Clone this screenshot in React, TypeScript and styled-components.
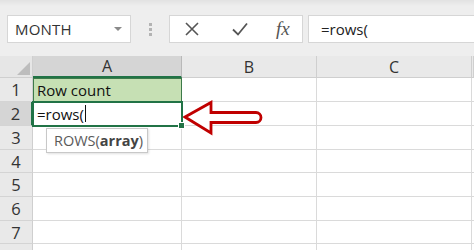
import React from "react";
import styled, { createGlobalStyle } from "styled-components";

const GlobalStyle = createGlobalStyle`
  html, body {
    margin: 0;
    padding: 0;
    background: #ffffff;
    overflow: hidden;
  }
  body {
    font-family: "Open Sans", "Noto Sans", "Liberation Sans", sans-serif;
  }
`;

const Page = styled.div`
  width: 474px;
  height: 250px;
  overflow: hidden;
  position: relative;
  background: #ffffff;
`;

const Toolbar = styled.div`
  height: 56px;
  box-sizing: border-box;
  padding: 15px 0 13px 7px;
  display: flex;
  align-items: stretch;
  background: linear-gradient(#e2e2e2 0px, #eeeeee 6px, #eeeeee 100%);
`;

const Box = styled.div<{ $w: number }>`
  width: ${(p) => p.$w}px;
  box-sizing: border-box;
  background: #ffffff;
  border: 1px solid #d6d6d6;
  display: flex;
  align-items: center;
`;

const NameBox = styled(Box)`
  padding: 0 8px 0 7px;
  justify-content: space-between;
  font-size: 15px;
  color: #333333;
  letter-spacing: 0.2px;
`;

const Caret = styled.span`
  width: 0;
  height: 0;
  border-left: 4px solid transparent;
  border-right: 4px solid transparent;
  border-top: 4px solid #8a8a8a;
`;

const Grip = styled.div`
  width: 38px;
  display: flex;
  justify-content: center;
  align-items: center;
  &::before {
    content: "";
    width: 0;
    height: 13px;
    border-left: 3px dotted #b3b3b3;
  }
`;

const ButtonBox = styled(Box)`
  padding-left: 14px;
  gap: 31px;
`;

const Fx = styled.span`
  font-family: "Liberation Serif", "DejaVu Serif", serif;
  font-style: italic;
  font-size: 19px;
  color: #555555;
  margin-left: -4px;
`;

const FormulaBox = styled(Box)`
  flex: 1;
  margin-left: 5px;
  border-right: none;
  padding-left: 12px;
  font-size: 15px;
  color: #222222;
`;

const Sheet = styled.div`
  display: grid;
  grid-template-columns: 33px 149px 135px 155px 2px;
  grid-template-rows: 22px 24px 24px 24px 23px 24px 24px 23px 24px;
  position: relative;
`;

const Corner = styled.div`
  background: #e6e6e6;
  border-right: 1px solid #cfcfcf;
  border-bottom: 1px solid #cfcfcf;
  position: relative;
  &::after {
    content: "";
    position: absolute;
    right: 2px;
    bottom: 2px;
    width: 0;
    height: 0;
    border-left: 13px solid transparent;
    border-bottom: 13px solid #bdbdbd;
  }
`;

const ColHead = styled.div<{ $active?: boolean }>`
  background: ${(p) => (p.$active ? "#d5d5d5" : "#e9e9e9")};
  border-right: 1px solid ${(p) => (p.$active ? "#b9b9b9" : "#cfcfcf")};
  border-bottom: ${(p) => (p.$active ? "2px solid #217346" : "1px solid #cfcfcf")};
  box-sizing: border-box;
  display: flex;
  align-items: center;
  justify-content: center;
  font-size: 16px;
  color: #333333;
`;

const RowHead = styled.div<{ $active?: boolean }>`
  background: ${(p) => (p.$active ? "#d5d5d5" : "#e9e9e9")};
  border-right: ${(p) => (p.$active ? "2px solid #217346" : "1px solid #cfcfcf")};
  border-bottom: 1px solid #d4d4d4;
  box-sizing: border-box;
  display: flex;
  align-items: center;
  justify-content: center;
  font-size: 16.5px;
  color: #333333;
`;

const Cell = styled.div<{ $fill?: string }>`
  background: ${(p) => p.$fill || "#ffffff"};
  border-right: 1px solid #dadada;
  border-bottom: 1px solid #dadada;
  box-sizing: border-box;
  display: flex;
  align-items: center;
  padding-left: 4px;
  font-size: 15px;
  color: #111111;
  white-space: nowrap;
  position: relative;
`;

const HeaderCell = styled(Cell)`
  outline: 1px solid #3d7a4a;
  outline-offset: -1px;
  z-index: 1;
`;

const ActiveCell = styled(Cell)`
  outline: 2px solid #217346;
  outline-offset: -1px;
  z-index: 2;
`;

const Cursor = styled.span`
  display: inline-block;
  width: 1px;
  height: 17px;
  background: #111111;
  margin-left: 1px;
`;

const Handle = styled.span`
  position: absolute;
  right: -4px;
  bottom: -4px;
  width: 5px;
  height: 5px;
  background: #217346;
  border: 1px solid #ffffff;
`;

const Tip = styled.div`
  position: absolute;
  left: 46px;
  top: 128px;
  width: 102px;
  height: 25px;
  box-sizing: border-box;
  background: #ffffff;
  border: 1px solid #c8c8c8;
  box-shadow: 1px 1px 2px rgba(0, 0, 0, 0.12);
  display: flex;
  align-items: center;
  padding-left: 7px;
  font-size: 14.5px;
  color: #5a5a5a;
  z-index: 3;
  b {
    font-weight: 700;
    color: #444444;
  }
`;

const Arrow = styled.svg`
  position: absolute;
  left: 183px;
  top: 100px;
  z-index: 4;
`;

const rows = ["1", "2", "3", "4", "5", "6", "7", ""];

function App() {
  return (
    <Page>
      <GlobalStyle />
      <Toolbar>
        <NameBox $w={124}>
          MONTH
          <Caret />
        </NameBox>
        <Grip />
        <ButtonBox $w={134}>
          <svg width="16" height="16" viewBox="0 0 16 16">
            <path d="M2 2 L14 14 M14 2 L2 14" stroke="#555555" strokeWidth="1.6" fill="none" />
          </svg>
          <svg width="18" height="16" viewBox="0 0 18 16">
            <path d="M2 8.5 L7 13.5 L16 2.5" stroke="#555555" strokeWidth="1.8" fill="none" />
          </svg>
          <Fx>fx</Fx>
        </ButtonBox>
        <FormulaBox $w={0}>=rows(</FormulaBox>
      </Toolbar>
      <Sheet>
        <Corner />
        <ColHead $active>A</ColHead>
        <ColHead>B</ColHead>
        <ColHead>C</ColHead>
        <ColHead />
        {rows.map((r, i) => (
          <React.Fragment key={i}>
            <RowHead $active={r === "2"}>{r}</RowHead>
            {r === "1" ? (
              <HeaderCell $fill="#c6e0b4">Row count</HeaderCell>
            ) : r === "2" ? (
              <ActiveCell>
                =rows(
                <Cursor />
                <Handle />
              </ActiveCell>
            ) : (
              <Cell />
            )}
            <Cell />
            <Cell />
            <Cell />
          </React.Fragment>
        ))}
      </Sheet>
      <Tip>
        ROWS(<b>array</b>)
      </Tip>
      <Arrow width="84" height="38" viewBox="0 0 84 38">
        <path
          d="M2 17 L28 2.5 L28 12.5 L73 12.5 A5 5 0 0 1 73 22.5 L28 22.5 L28 33 Z"
          fill="#ffffff"
          stroke="#c00000"
          strokeWidth="2.8"
          strokeLinejoin="miter"
        />
      </Arrow>
    </Page>
  );
}

export default App;
